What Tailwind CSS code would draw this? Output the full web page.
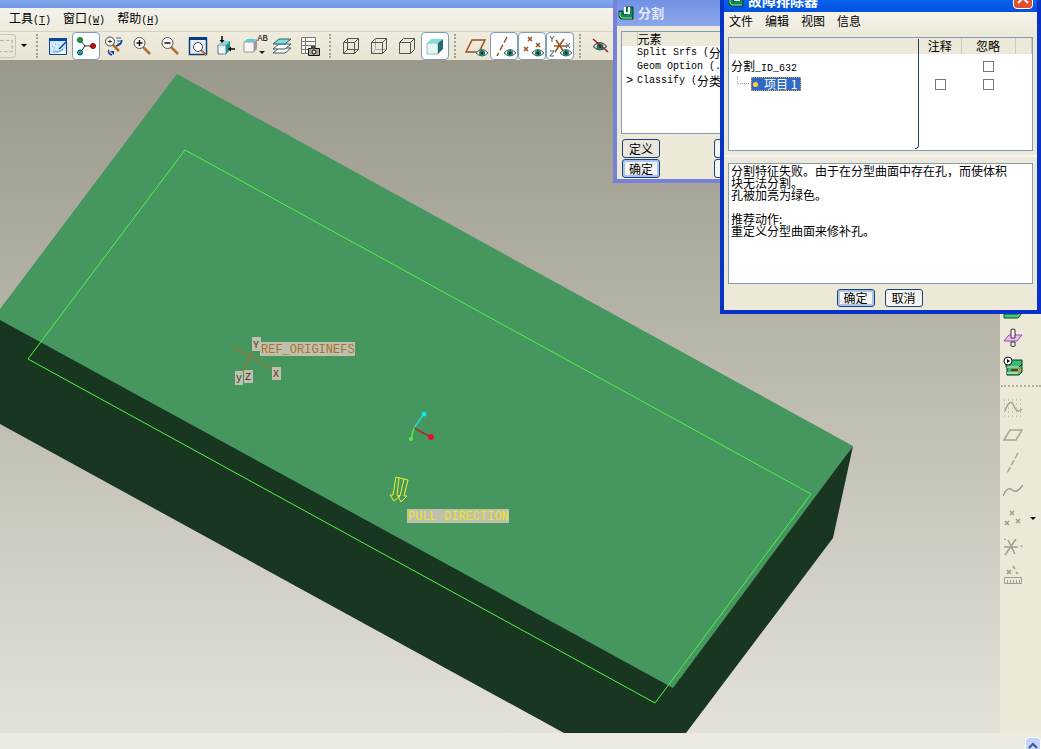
<!DOCTYPE html>
<html lang="zh-CN">
<head>
    <meta charset="UTF-8">
    <meta name="viewport" content="width=device-width, initial-scale=1.0">
    <title>分割 - 故障排除器</title>
    <script src="https://cdn.jsdelivr.net/npm/@tailwindcss/browser@4"></script>
</head>
<body class="relative flex h-screen flex-col overflow-hidden bg-[#ece9d8] font-['Noto_Sans_CJK_SC',sans-serif] text-xs text-black">

    <!-- shared icons -->
    <svg class="hidden" aria-hidden="true">
        <symbol id="eye" viewBox="0 0 12 8"><path d="M0 4Q6-3 12 4Q6 10 0 4Z" fill="#e8f4f0" stroke="#555"/><circle cx="6" cy="4" r="3" fill="#12806c"/><circle cx="6" cy="4" r="1.2" fill="#033"/></symbol>
        <symbol id="app" viewBox="0 0 16 16"><path d="M1 6h4v3h3V2h7v12H3l-2-2Z" fill="#128a50" stroke="#024024"/><path d="M7 2v6h4V2" fill="none" stroke="#fff" stroke-width="2"/><path d="M2 7v4l2 2h10" fill="none" stroke="#8fe0b0"/></symbol>
    </svg>

    <div class="h-2 shrink-0 bg-linear-to-b from-[#83a9ef] to-[#7296e0]"></div>

    <nav class="flex h-6 shrink-0 items-center gap-3 border-b border-[#d5d1c0] bg-linear-to-b from-[#f4f2ea] to-[#eeebdd] px-[9px] pb-px leading-4">
        <button>工具<span class="font-['Liberation_Mono',monospace] text-[10px]">(<u>T</u>)</span></button>
        <button>窗口<span class="font-['Liberation_Mono',monospace] text-[10px]">(<u>W</u>)</span></button>
        <button>帮助<span class="font-['Liberation_Mono',monospace] text-[10px]">(<u>H</u>)</span></button>
    </nav>

    <div class="flex h-7 shrink-0 items-center bg-linear-to-b from-[#efecdf] to-[#e9e5d3]" role="toolbar">
        <button aria-label="选取" class="flex h-6 w-4 items-center justify-end rounded-r border border-l-0 border-[#c9c5b4]">
            <svg class="h-5 w-4" viewBox="0 0 16 20"><path d="M0 4h13v12H0" fill="none" stroke="#aaa" stroke-dasharray="4 2"/></svg>
        </button>
        <button aria-label="选取选项" class="flex h-7 w-[15px] items-center justify-center">
            <svg class="h-3 w-3" viewBox="0 0 12 12"><path d="M3 4h6L6 7Z"/></svg>
        </button>
        <i class="ml-[5px] mr-[6px] h-6 w-0 border-l-2 border-dotted border-[#a5a18f]"></i>
        <button aria-label="重画" class="flex size-7 items-center justify-center">
            <svg class="size-5" viewBox="0 0 20 20"><path d="M1.500 2.500h17v16h-17Z" fill="#bfe2fa" stroke="#0d4496"/><path d="M1 2h18v3H1Z" fill="#0c479c"/><path d="M2 6h16L9 15l-3-2-4 3Z" fill="#d4ecfb"/><path d="M5 16q7 3 12-3l1 5H3Z" fill="#fff"/><path d="M4 10h1M7 8h1M6 12h1M10 9h1M5 16q6 1 10-3" fill="none" stroke="#5694cc"/><path d="m11 13 7-7" stroke="#0d4496" stroke-width="1.500"/></svg>
        </button>
        <button aria-label="旋转中心" class="flex size-7 items-center justify-center rounded-sm border border-[#7d9db9] bg-white">
            <svg class="size-5" viewBox="0 0 20 20"><path d="m4 4 5 6-5 7M9 10h8" fill="none" stroke="#333"/><circle cx="4" cy="4" r="2.500" fill="#17a32b" stroke="#064"/><circle cx="4" cy="16.500" r="2.500" fill="#1ba6b8" stroke="#045"/><circle cx="17" cy="10" r="2.500" fill="#c41525" stroke="#600"/></svg>
        </button>
        <button aria-label="定向模式" class="flex size-7 items-center justify-center">
            <svg class="size-5" viewBox="0 0 20 20"><path d="m9 9 6 6" stroke="#b76a32" stroke-width="2.500"/><circle cx="6" cy="5.500" r="4.500" fill="#f4f4ee" stroke="#444"/><path d="M4 5.500h4M6 4v3" stroke="#333"/><path d="M12 2h5M13 5h5M13 8h4" stroke="#3e5db8"/><path d="M5 14q-2 3 3 5M12 10q5-1 6-6" fill="none" stroke="#1737a5" stroke-width="1.500"/><path d="M6 15h4v4Z" fill="#1737a5"/></svg>
        </button>
        <button aria-label="放大" class="flex size-7 items-center justify-center">
            <svg class="size-5" viewBox="0 0 20 20"><path d="m11 11 7 7" stroke="#b76a32" stroke-width="2.500"/><circle cx="7.500" cy="7" r="5.500" fill="#f9f9f5" stroke="#555"/><path d="M4.500 7h6M7.500 4v6" stroke="#111" stroke-width="1.500"/></svg>
        </button>
        <button aria-label="缩小" class="flex size-7 items-center justify-center">
            <svg class="size-5" viewBox="0 0 20 20"><path d="m11 11 7 7" stroke="#b76a32" stroke-width="2.500"/><circle cx="7.500" cy="7" r="5.500" fill="#f9f9f5" stroke="#555"/><path d="M4.500 7h6" stroke="#111" stroke-width="1.500"/></svg>
        </button>
        <button aria-label="重新调整" class="flex size-7 items-center justify-center">
            <svg class="size-5" viewBox="0 0 20 20"><path d="M1.500 2.500h17v16h-17Z" fill="#e7eef5" stroke="#123c7c" stroke-width="1.500"/><path d="M1 1h18v3H1Z" fill="#0c3c88"/><path d="m13 14 5 5" stroke="#b76a32" stroke-width="2"/><circle cx="10" cy="11" r="4.500" fill="#fff" stroke="#444"/></svg>
        </button>
        <button aria-label="重定向" class="flex size-7 items-center justify-center">
            <svg class="size-5" viewBox="0 0 20 20"><path d="M2 9h8v9H2Z" fill="#eefafa" stroke="#679"/><path d="m2 9 4-4h8l-4 4Z" fill="#7cd8dc"/><path d="m10 9 4-4v9l-4 4Z" fill="#24938e"/><path d="M6 0v5M19 13h-5" stroke="#000" stroke-width="1.500"/><path d="M3.500 4h5L6 7ZM15 10.500v5L12 13Z"/></svg>
        </button>
        <button aria-label="已保存的视图" class="relative flex size-7 items-center justify-center">
            <svg class="size-6" viewBox="0 0 24 24"><path d="M2 8h10v10H2Z" fill="#f7f9f7" stroke="#999"/><path d="m2 8 3-3h9l-2 3Z" fill="#66c9d1"/><path d="m12 8 3-3v10l-3 3Z" fill="#999"/><path d="M17 17h6l-3 3Z" fill="#222"/></svg>
            <span class="absolute top-px right-0 font-['Liberation_Mono',monospace] text-[9px] leading-3">AB</span>
        </button>
        <button aria-label="图层" class="flex size-7 items-center justify-center">
            <svg class="size-5" viewBox="0 0 20 20" stroke="#3b5b60"><path d="M1 17h12l6-5H7Z" fill="#fff"/><path d="M1 13h12l6-5H7Z" fill="#fff"/><path d="M1 8h12l6-5H7Z" fill="#7be0e0"/></svg>
        </button>
        <button aria-label="视图管理器" class="flex size-7 items-center justify-center">
            <svg class="size-5" viewBox="0 0 20 20"><path d="M1.500 1.500h14v16h-14ZM5.500 1v16M1 5.500h14M1 9.500h14M1 13.500h14" fill="#fafaf5" stroke="#777"/><path d="M8.500 12.500h11v7h-11Z" fill="#aaa796" stroke="#111"/><path d="M11 10h4v3h-4Z" fill="#444"/><circle cx="14" cy="16" r="2" fill="#ddd" stroke="#111"/></svg>
        </button>
        <i class="ml-[5px] mr-[6px] h-6 w-0 border-l-2 border-dotted border-[#a5a18f]"></i>
        <button aria-label="线框" class="flex size-7 items-center justify-center">
            <svg class="size-5" viewBox="0 0 20 20" fill="none" stroke="#555"><path d="M2.500 6.500h11v11h-11ZM6.500 2.500h11v11h-11ZM2.500 6.500l4-4M13.500 6.500l4-4M13.500 17.500l4-4M2.500 17.500l4-4"/></svg>
        </button>
        <button aria-label="隐藏线" class="flex size-7 items-center justify-center">
            <svg class="size-5" viewBox="0 0 20 20" fill="none" stroke="#555"><path d="M6.500 3v10.500H17M6.500 13.500l-4 4" stroke="#aaa"/><path d="M2.500 6.500h11v11h-11ZM2.500 6.500l4-4h11v11l-4 4M13.500 6.500l4-4"/></svg>
        </button>
        <button aria-label="消隐" class="flex size-7 items-center justify-center">
            <svg class="size-5" viewBox="0 0 20 20" fill="none" stroke="#555"><path d="M2.500 6.500h11v11h-11ZM2.500 6.500l4-4h11v11l-4 4M13.500 6.500l4-4"/></svg>
        </button>
        <button aria-label="着色" class="flex size-7 items-center justify-center rounded-sm border border-[#7d9db9] bg-white">
            <svg class="size-5" viewBox="0 0 20 20"><path d="M2 7h11v11H2Z" fill="#e6f5f5" stroke="#9bb"/><path d="m2 7 4-4h12l-5 4Z" fill="#7fdce0"/><path d="m13 7 5-4v10l-5 5Z" fill="#256a70"/></svg>
        </button>
        <i class="ml-[5px] mr-[6px] h-6 w-0 border-l-2 border-dotted border-[#a5a18f]"></i>
        <button aria-label="平面显示" class="flex size-7 items-center justify-center">
            <svg class="size-6" viewBox="0 0 24 24"><path d="M2 18 8 6h13l-6 12Z" fill="none" stroke="#9a4f26" stroke-width="1.500"/><use href="#eye" x="12" y="15" width="12" height="8"/></svg>
        </button>
        <button aria-label="轴显示" class="flex size-7 items-center justify-center rounded-sm border border-[#7d9db9] bg-white">
            <svg class="size-6" viewBox="0 0 24 24"><path d="M15 3 5 22" stroke="#9a4f26" stroke-width="1.500" stroke-dasharray="6 3"/><use href="#eye" x="12" y="15" width="12" height="8"/></svg>
        </button>
        <button aria-label="点显示" class="flex size-7 items-center justify-center rounded-sm border border-[#7d9db9] bg-white">
            <svg class="size-6" viewBox="0 0 24 24"><path d="m8 3 4 4m0-4L8 7M16 9l4 4m0-4-4 4M4 13l4 4m0-4-4 4" stroke="#9a4f26" stroke-width="1.500"/><use href="#eye" x="12" y="15" width="12" height="8"/></svg>
        </button>
        <button aria-label="坐标系显示" class="flex size-7 items-center justify-center rounded-sm border border-[#7d9db9] bg-white">
            <svg class="size-6" viewBox="0 0 24 24"><path d="M6 12h13M16 5 7 18M8 6l8 12" stroke="#9a4f26" stroke-width="1.500"/><path d="m2 2 2 3 2-3M4 5v3M18 9l4 5m0-5-4 5M2 17h4l-4 5h4" fill="none" stroke="#556"/><use href="#eye" x="12" y="15" width="12" height="8"/></svg>
        </button>
        <i class="ml-[5px] mr-[6px] h-6 w-0 border-l-2 border-dotted border-[#a5a18f]"></i>
        <button aria-label="注释显示" class="flex size-7 items-center justify-center">
            <svg class="size-5" viewBox="0 0 20 20"><use href="#eye" x="2" y="6" width="14" height="9"/><path d="m2 3 15 13" stroke="#901c1c" stroke-width="1.500"/></svg>
        </button>
    </div>

    <main class="flex min-h-0 flex-1">
        <!-- model viewport -->
        <section class="min-w-0 flex-1 overflow-hidden bg-linear-to-b from-[#9a978b] to-[#e4e1d6]">
            <svg class="h-full w-full" viewBox="0 60 1000 673" preserveAspectRatio="xMinYMin slice">
                <path d="M0 315 673 680 853 446 833 538 686 733H564L0 424Z" fill="#193720"/>
                <path d="M177 74 853 446 673 688 0 320v-11Z" fill="#46965f"/>
                <path d="M185 150 811 494 655 703 28 359Z" fill="none" stroke="#4cf644"/>
                <g stroke="#8d7b3b" stroke-width="1.500"><path d="m232 346 44 25M257 344l-16 31"/></g>
                <g fill="#bfc0ae"><path d="M252 337h9v14h-9ZM260 342h95v14h-95ZM235 371h8v14h-8ZM244 370h9v13h-9ZM272 367h9v13h-9Z"/><path d="M407 509h102v14H407Z"/></g>
                <g class="font-['Liberation_Mono',monospace] text-[10px]" fill="#4a3028">
                    <text x="253" y="348">Y</text><text x="236" y="381">y</text><text x="245" y="380">Z</text><text x="273" y="377">X</text>
                </g>
                <text x="261" y="353" class="font-['Liberation_Mono',monospace] text-xs" fill="#a8762d">REF_ORIGINEFS</text>
                <text x="408" y="520" class="font-['Liberation_Mono',monospace] text-xs" fill="#e9e32c">PULL DIRECTION</text>
                <path d="m414 428 10-14" stroke="#2bd8d8" stroke-width="1.500"/><circle cx="424" cy="414" r="2.500" fill="#16e1e3"/>
                <path d="m414 428 17 9" stroke="#a02f38" stroke-width="1.500"/><circle cx="431" cy="437" r="3" fill="#e90d35"/>
                <path d="m414 428-3 11" stroke="#59e843" stroke-width="1.500"/><circle cx="411" cy="439" r="2" fill="#59f043"/>
                <path d="m396 477 12 3-4 16h3l-6 6-3-6h2l4-17M396 477l-3 18h-3l4 6 6-5-3-1 2-17" fill="none" stroke="#edf22c"/>
            </svg>
        </section>

        <!-- feature tools -->
        <aside class="flex w-[41px] shrink-0 flex-col bg-[#ece9d8] pt-[236px] pl-px">
            <button aria-label="拉伸" class="flex h-7 w-6 items-center justify-center">
                <svg class="size-5" viewBox="0 0 20 20"><path d="M1 13 5 8h14v5l-4 5H1Z" fill="#49c97b" stroke="#075228"/><path d="M1 14h14l4-5" fill="none" stroke="#075228"/></svg>
            </button>
            <button aria-label="分型面" class="flex h-7 w-6 items-center justify-center">
                <svg class="size-5" viewBox="0 0 20 20"><path d="M1 13 6 7h13l-5 6Z" fill="#e8bdf0" stroke="#a34ab0"/><path d="M8 1.500q2-1 4 0V10H8ZM8 14h4v4q-2 1-4 0Z" fill="#f4f4ee" stroke="#333"/></svg>
            </button>
            <button aria-label="体积块分割" class="flex h-7 w-6 items-center justify-center">
                <svg class="size-5" viewBox="0 0 20 20"><path d="m3 7 3-3h13v4l-3 3H3ZM4 11h12l3-3v8l-3 3H4Z" fill="#3cba73" stroke="#053f22"/><path d="M4 11h12M4 17h11" stroke="#b9ecc0" stroke-width="1.500"/><path d="M8 13h7v2H8Z" fill="#82351c"/><path d="M15 13h3v3h-3Z" fill="#d9a03a"/><circle cx="5" cy="5" r="4" fill="#fff" stroke="#111"/><path d="m4 3 3 2-3 2Z"/></svg>
            </button>
            <hr class="mt-[5px] mb-[6px] border-t-2 border-dotted border-[#b5b19f]">
            <button aria-label="草绘" class="flex h-7 w-6 items-center justify-center">
                <svg class="size-5" viewBox="0 0 20 20" fill="none" stroke="#a9a696"><path d="M1 3h18M1 7h18M1 11h18M1 15h18M1 19h18" stroke-dasharray="1 3"/><path d="M2 14q5-14 9-5 3 8 8 3" stroke-width="1.500"/></svg>
            </button>
            <button aria-label="基准平面" class="flex h-7 w-6 items-center justify-center">
                <svg class="size-5" viewBox="0 0 20 20"><path d="M1 15 7 5h12l-6 10Z" fill="none" stroke="#a9a696" stroke-width="1.500"/></svg>
            </button>
            <button aria-label="基准轴" class="flex h-7 w-6 items-center justify-center">
                <svg class="size-5" viewBox="0 0 20 20"><path d="M15 0 4 20" stroke="#a9a696" stroke-width="1.500" stroke-dasharray="6 2"/></svg>
            </button>
            <button aria-label="基准曲线" class="flex h-7 w-6 items-center justify-center">
                <svg class="size-5" viewBox="0 0 20 20"><path d="M0 15q4-10 9-6t11-5" fill="none" stroke="#a09d8e" stroke-width="1.500"/></svg>
            </button>
            <div class="flex h-7 items-center justify-between">
                <button aria-label="基准点" class="flex h-7 w-6 items-center justify-center">
                    <svg class="size-5" viewBox="0 0 20 20"><path d="m7 2 4 4m0-4L7 6M13 10l4 4m0-4-4 4M2 12l4 4m0-4-4 4" stroke="#a09d8e" stroke-width="1.500"/></svg>
                </button>
                <button aria-label="基准点选项" class="w-[14px]"><svg class="h-3 w-3" viewBox="0 0 12 12"><path d="M3 4h6L6 7Z"/></svg></button>
            </div>
            <button aria-label="坐标系" class="flex h-7 w-6 items-center justify-center">
                <svg class="size-5" viewBox="0 0 20 20"><path d="M1 10h14M13 2 2 18M5 3l7 14" fill="none" stroke="#a09d8e" stroke-width="1.500"/><path d="M17 9h3M1 2l2 1" stroke="#a09d8e"/></svg>
            </button>
            <button aria-label="分析" class="flex h-7 w-6 items-center justify-center">
                <svg class="size-5" viewBox="0 0 20 20" fill="none" stroke="#a09d8e"><path d="m4 5 4 4m0-4L4 9M10 1l2 3M13 7l2 2" stroke-width="1.500"/><path d="M1.500 12.500h17v6h-17ZM4.500 18v-3M7.500 18v-3M10.500 18v-3M13.500 18v-3M16.500 18v-3"/></svg>
            </button>
        </aside>
    </main>

    <footer class="flex h-4 shrink-0 justify-end overflow-hidden bg-[#edeae0]">
        <button aria-label="展开" class="mt-1 flex h-4 w-4 justify-center rounded-sm border border-white bg-[#c3d4fc]">
            <svg class="mt-1 h-2 w-3" viewBox="0 0 12 8"><path d="m2 6 4-4 4 4" fill="none" stroke="#3d5390" stroke-width="2"/></svg>
        </button>
    </footer>

    <!-- 分割 window -->
    <section class="absolute top-0 left-[613px] flex h-[183px] w-64 flex-col border-4 border-t-0 border-[#7881d8] bg-[#ece9d8]">
        <h2 class="flex h-[26px] shrink-0 items-center gap-1 bg-linear-to-b from-[#7391e4] to-[#8aa7ea] pl-px text-[13px] font-bold text-[#e0e8fa]">
            <svg class="size-4"><use href="#app"/></svg>分割
        </h2>
        <div class="mx-1 mt-[5px] h-[103px] shrink-0 border border-[#7f9db9] bg-white">
            <table class="w-full table-fixed border-collapse text-left leading-[14px]">
                <thead>
                    <tr class="bg-[#ece9d8]"><th class="w-[15px] border-r border-[#d0ccba]"></th><th class="font-normal">元素</th></tr>
                </thead>
                <tbody class="whitespace-nowrap">
                    <tr><td></td><td><div class="flex h-[14px] items-center"><span class="font-['Liberation_Mono',monospace] text-[10px]">Split Srfs (</span>分型面)</div></td></tr>
                    <tr><td></td><td><div class="flex h-[14px] items-center"><span class="font-['Liberation_Mono',monospace] text-[10px]">Geom Option (...)</span></div></td></tr>
                    <tr><td><div class="flex h-[14px] items-center justify-center font-['Liberation_Mono',monospace]">&gt;</div></td><td><div class="flex h-[14px] items-center"><span class="font-['Liberation_Mono',monospace] text-[10px]">Classify (</span>分类)</div></td></tr>
                </tbody>
            </table>
        </div>
        <div class="mx-[5px] mt-1 grid grid-cols-[38px_38px] gap-x-[54px] gap-y-px pt-px leading-4">
            <button class="h-[19px] rounded-[3px] border border-[#1d4273] bg-[#e8e6dd]">定义</button>
            <button class="h-[19px] rounded-[3px] border border-[#1d4273] bg-[#f5f5f1]" aria-label="参照"></button>
            <button class="h-[19px] rounded-[3px] border border-[#1d4273] bg-[#f5f5f1] inset-ring-2 inset-ring-[#a9c4f2]">确定</button>
            <button class="h-[19px] rounded-[3px] border border-[#1d4273] bg-[#f5f5f1]" aria-label="取消"></button>
        </div>
    </section>

    <!-- 故障排除器 window -->
    <section class="absolute top-0 right-0 flex h-[314px] w-[321px] flex-col border-x-4 border-b-4 border-[#0831c6] bg-[#ece9d8]">
        <h2 class="relative flex h-3 shrink-0 items-end gap-1 overflow-hidden bg-linear-to-b from-[#0762ee] to-[#0450dc] px-1 text-sm leading-4 font-bold text-white">
            <svg class="mb-1 size-4 shrink-0"><use href="#app"/></svg><span class="mb-1">故障排除器</span>
            <button aria-label="关闭" class="absolute right-1 bottom-[3px] flex h-5 w-5 items-end justify-center rounded-sm border border-white bg-[#e0502e]">
                <svg class="mb-1 size-3" viewBox="0 0 12 12"><path d="m1 1 10 10M11 1 1 11" stroke="#fff" stroke-width="2"/></svg>
            </button>
        </h2>
        <nav class="flex h-6 shrink-0 items-start gap-3 bg-linear-to-b from-[#f5f3ec] to-[#ece9d8] px-[5px] leading-[18px]">
            <button>文件</button><button>编辑</button><button>视图</button><button>信息</button>
        </nav>
        <div class="relative mx-1 mt-px h-[114px] shrink-0 border border-[#7f9db9] bg-white">
            <table class="w-full table-fixed border-collapse leading-4">
                <thead>
                    <tr class="h-4 bg-[#ece9d8]">
                        <th class="w-[190px]"></th>
                        <th class="w-[42px] border-r border-[#d0ccba] font-normal">注释</th>
                        <th class="w-[54px] border-r border-[#d0ccba] font-normal">忽略</th>
                        <th class="border-r border-[#d0ccba]"></th>
                    </tr>
                </thead>
                <tbody>
                    <tr class="h-[21px]">
                        <td class="pl-[2px] pt-[3px]">分割<span class="font-['Liberation_Mono',monospace] text-[10px] leading-[10px]">_ID_632</span></td>
                        <td></td>
                        <td class="pt-[3px]"><input type="checkbox" aria-label="忽略 分割_ID_632" class="mx-auto block size-[11px] appearance-none border border-[#777] bg-white"></td>
                        <td></td>
                    </tr>
                    <tr class="h-[18px]">
                        <td>
                            <div class="flex h-[14px] items-center">
                                <i class="ml-2 mb-2 h-2 w-3 border-b border-l border-dotted border-[#aaa]"></i>
                                <span class="ml-[2px] flex h-[14px] w-[50px] items-center gap-[6px] border border-dotted border-[#e0a040] bg-[#316ac5] text-white"><b class="ml-px size-[5px] shrink-0 rounded-full bg-[#ffd23c]"></b><span class="whitespace-nowrap">项目 1</span></span>
                            </div>
                        </td>
                        <td><input type="checkbox" aria-label="注释 项目 1" class="mx-auto block size-[11px] appearance-none border border-[#777] bg-white"></td>
                        <td><input type="checkbox" aria-label="忽略 项目 1" class="mx-auto block size-[11px] appearance-none border border-[#777] bg-white"></td>
                        <td></td>
                    </tr>
                </tbody>
            </table>
            <i class="absolute top-px bottom-px left-[186px] w-1 rounded-br-sm border-r border-b border-[#17466e]"></i>
        </div>
        <hr class="mt-1 border-t-2 border-[#f8f6ee]">
        <div class="mx-1 mt-[6px] h-[121px] shrink-0 border border-[#7f9db9] bg-white px-[2px] py-px leading-3">
            <p>分割特征失败。由于在分型曲面中存在孔，而使体积<br>块无法分割。<br>孔被加亮为绿色。</p>
            <p class="mt-3">推荐动作:<br>重定义分型曲面来修补孔。</p>
        </div>
        <div class="mt-1 flex justify-center gap-[10px] pt-px pr-[2px] leading-4">
            <button class="h-[18px] w-[38px] rounded-[3px] border border-[#1d4273] bg-[#f5f5f1] inset-ring-2 inset-ring-[#a9c4f2]">确定</button>
            <button class="h-[18px] w-[38px] rounded-[3px] border border-[#1d4273] bg-[#f5f5f1]">取消</button>
        </div>
    </section>
</body>
</html>
